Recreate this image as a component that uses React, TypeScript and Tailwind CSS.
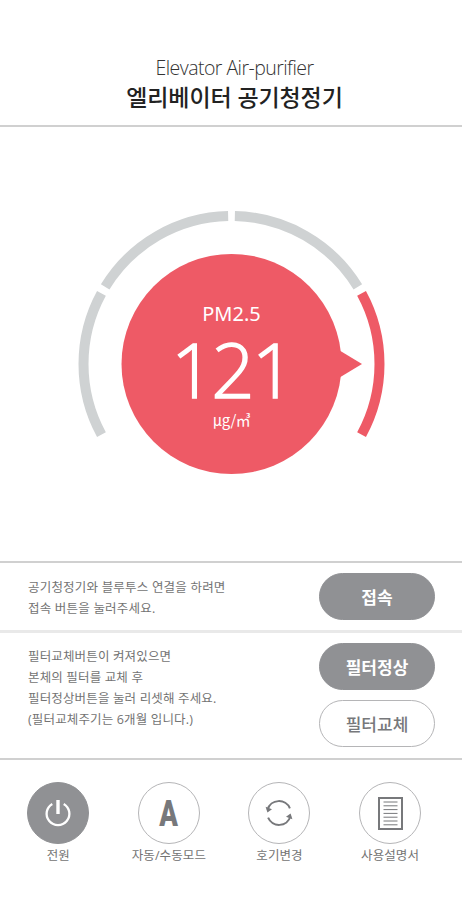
import { useState } from 'react';
import type { ReactNode } from 'react';

const CX = 153.5;
const CY = 153;
const R = 148;

// angles in degrees, 0 = top, clockwise
const segments = [
  { from: -118.5, to: -61.5 },
  { from: -58.6, to: -1.3 },
  { from: 1.3, to: 58.6 },
  { from: 61.5, to: 118.5 },
];

function point(deg: number) {
  const rad = (deg * Math.PI) / 180;
  return `${(CX + R * Math.sin(rad)).toFixed(2)} ${(CY - R * Math.cos(rad)).toFixed(2)}`;
}

function Gauge({ value, level }: { value: number; level: number }) {
  return (
    <div className="relative w-[307px] h-[264px] ml-[78px]">
      <svg width="307" height="264" viewBox="0 0 307 264" fill="none">
        {segments.map((s, i) => (
          <path
            key={s.from}
            d={`M${point(s.from)} A${R} ${R} 0 0 1 ${point(s.to)}`}
            stroke={i === level ? '#ee5a66' : '#cfd2d3'}
            strokeWidth="10"
          />
        ))}
        <circle cx={CX} cy={CY} r="110" fill="#ee5a66" />
        <path d="M255 135.5 L284 153 L255 170.5 Z" fill="#ee5a66" />
      </svg>
      <div className="absolute inset-0 flex flex-col items-center text-white whitespace-nowrap">
        <span className="mt-[89px] h-7 text-[20px] leading-7 font-['Noto_Sans']">PM2.5</span>
        <span className="mt-[1px] h-[80px] text-[76px] leading-[80px] tracking-[-3px] font-light [-webkit-text-stroke:1.4px_white]">
          {value}
        </span>
        <span className="mt-[1px] h-5 text-[15px] leading-5 tracking-[-0.5px] font-['Noto_Sans_CJK_KR']">μg/㎥</span>
      </div>
    </div>
  );
}

function PillButton({ active, onClick, children }: { active?: boolean; onClick?: () => void; children: ReactNode }) {
  return (
    <button
      onClick={onClick}
      className={`w-[116px] h-[47px] rounded-full border pt-[2px] text-[17px] leading-none ${
        active ? 'bg-[#909194] border-[#909194] text-white font-bold' : 'bg-white border-[#b5b5b7] text-[#77787b] font-medium'
      }`}
    >
      {children}
    </button>
  );
}

function MenuItem({ label, active, children }: { label: string; active?: boolean; children: ReactNode }) {
  return (
    <button className="w-[110.6px] flex flex-col items-center">
      <span
        className={`w-[62px] h-[62px] rounded-full border flex items-center justify-center ${
          active ? 'bg-[#909194] border-[#909194] text-white' : 'border-[#b5b5b7] text-[#77787b]'
        }`}
      >
        {children}
      </span>
      <span className="mt-[3px] text-[12.5px] leading-[18px] tracking-[0.1px] text-[#737373] whitespace-nowrap">{label}</span>
    </button>
  );
}

function PowerIcon() {
  return (
    <svg width="28" height="28" viewBox="0 0 28 28" fill="none" stroke="currentColor" strokeWidth="2.3">
      <path d="M8.3 4.9 A11.4 11.4 0 1 0 19.7 4.9" />
      <path d="M14 1 V15" strokeWidth="3.4" />
    </svg>
  );
}

function CycleIcon() {
  return (
    <svg width="30" height="30" viewBox="0 0 30 30" fill="none" stroke="currentColor" strokeWidth="2">
      <path d="M3.6 11.5 A11.9 11.9 0 0 1 25.9 10.3" />
      <path d="M26.4 18.5 A11.9 11.9 0 0 1 4.1 19.7" />
      <path d="M1.6 8.8 L8 11.2 L3.4 14.6 Z" fill="currentColor" stroke="none" />
      <path d="M28.4 21.2 L22 18.8 L26.6 15.4 Z" fill="currentColor" stroke="none" />
    </svg>
  );
}

function ManualIcon() {
  return (
    <svg width="25" height="33" viewBox="0 0 25 33" fill="none" stroke="currentColor">
      <rect x="1" y="1" width="23" height="31" strokeWidth="2" />
      <path d="M5.5 5 H19.5 M5.5 8.8 H19.5 M5.5 12.6 H19.5 M5.5 16.4 H19.5 M5.5 20.2 H19.5 M5.5 24 H19.5 M5.5 27.8 H19.5" strokeWidth="1" />
    </svg>
  );
}

export default function App() {
  const [filterOk, setFilterOk] = useState(true);

  return (
    <div className="w-[462px] h-[900px] bg-white overflow-hidden font-['Open_Sans','Noto_Sans_CJK_KR',sans-serif]">
      <header className="h-[127px] border-b-2 border-[#d0d0d0] flex flex-col items-center pl-[7px] pt-[55px]">
        <p className="text-[19.5px] leading-[26px] tracking-[-0.55px] font-light text-[#333]">Elevator Air-purifier</p>
        <h1 className="text-[23px] leading-[32px] tracking-[-0.1px] font-medium text-[#222] whitespace-nowrap">엘리베이터 공기청정기</h1>
      </header>

      <main className="h-[434px] pt-[84px]">
        <Gauge value={121} level={3} />
      </main>

      <section className="h-[69px] border-t-2 border-[#d0d0d0] flex justify-between pl-[28px] pr-[27px]">
        <p className="pt-[14px] text-[12.5px] leading-[21px] tracking-[0.2px] text-[#737373] whitespace-nowrap">
          공기청정기와 블루투스 연결을 하려면
          <br />
          접속 버튼을 눌러주세요.
        </p>
        <div className="pt-[10px]">
          <PillButton active>접속</PillButton>
        </div>
      </section>

      <section className="h-[128px] border-t-[3px] border-[#e9e9e9] flex justify-between pl-[28px] pr-[27px]">
        <p className="pt-[13px] text-[12.5px] leading-[21px] tracking-[0.15px] text-[#737373] whitespace-nowrap">
          필터교체버튼이 켜져있으면
          <br />
          본체의 필터를 교체 후
          <br />
          필터정상버튼을 눌러 리셋해 주세요.
          <br />
          (필터교체주기는 6개월 입니다.)
        </p>
        <div className="pt-[10px] flex flex-col gap-[10px]">
          <PillButton active={filterOk} onClick={() => setFilterOk(true)}>필터정상</PillButton>
          <PillButton active={!filterOk} onClick={() => setFilterOk(false)}>필터교체</PillButton>
        </div>
      </section>

      <nav className="h-[142px] border-t-2 border-[#d0d0d0] flex items-start pl-[3px] pt-[22px]">
        <MenuItem label="전원" active>
          <PowerIcon />
        </MenuItem>
        <MenuItem label="자동/수동모드">
          <span className="inline-block scale-x-[0.74] text-[37px] leading-none font-black font-['Roboto']">A</span>
        </MenuItem>
        <MenuItem label="호기변경">
          <CycleIcon />
        </MenuItem>
        <MenuItem label="사용설명서">
          <ManualIcon />
        </MenuItem>
      </nav>
    </div>
  );
}
